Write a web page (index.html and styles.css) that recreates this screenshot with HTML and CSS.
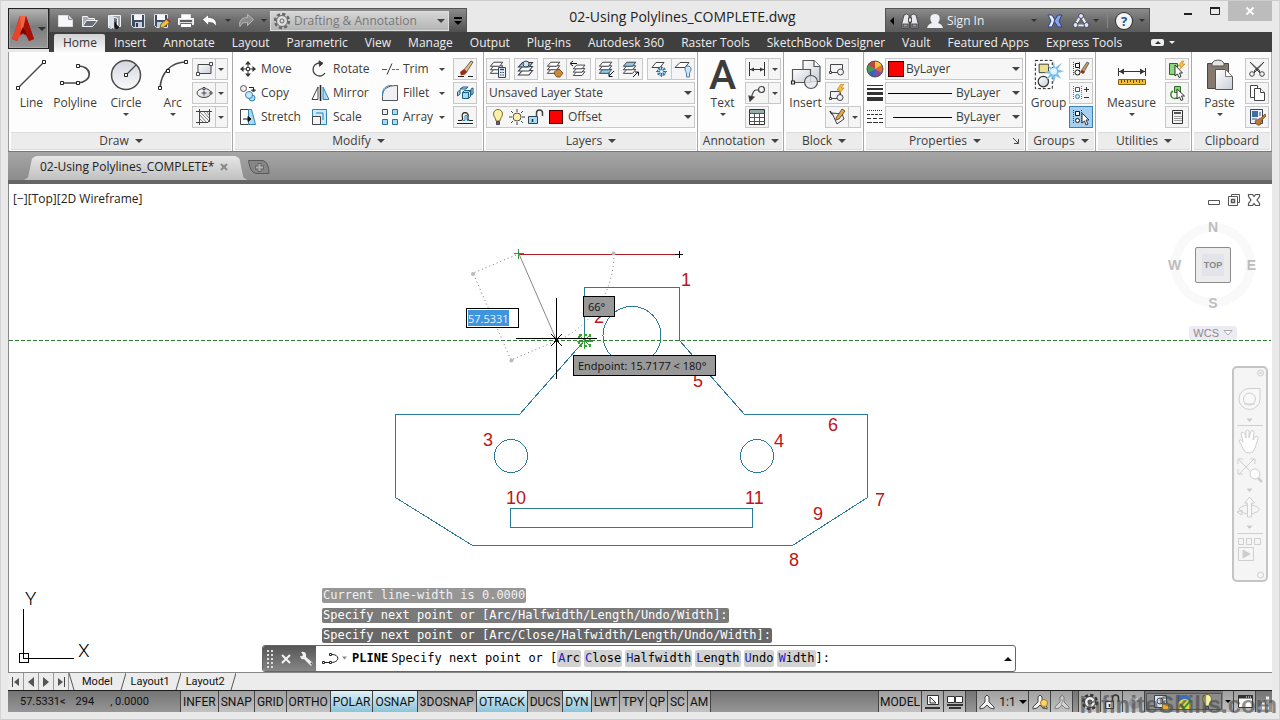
FILE: index.html
```html
<!DOCTYPE html>
<html lang="en">
<head>
<meta charset="utf-8">
<title>02-Using Polylines_COMPLETE.dwg</title>
<link rel="stylesheet" href="styles.css">
</head>
<body>
<svg class="defs" aria-hidden="true">
  <defs>
    <linearGradient id="steel" x1="0" y1="0" x2="1" y2="1"><stop offset="0" stop-color="#fff"/><stop offset="1" stop-color="#c9ced8"/></linearGradient>
    <linearGradient id="steelV" x1="0" y1="0" x2="0" y2="1"><stop offset="0" stop-color="#d2d6de"/><stop offset="1" stop-color="#fafafa"/></linearGradient>
    <symbol id="stack" viewBox="0 0 18 18">
      <g stroke="#3c3c44" stroke-width="1.1">
        <path d="M5.500 10.500h10l-3.500 4.500H1.500z" class="lay-c"/>
        <path d="M5.500 6.500h10l-3.500 4.500H1.500z" class="lay-b"/>
        <path d="M5.500 2.500h10l-3.500 4.500H1.500z" class="lay-a"/>
      </g>
    </symbol>
    <symbol id="scale" viewBox="0 0 18 18">
      <path d="M9 2L7 4v5L2 14v2l4-1 3-3 3 3 4 1v-2l-5-5V4z" fill="#f4f4f4" stroke="#444" stroke-width="1"/>
    </symbol>
  </defs>
</svg>

<header class="top">
  <button class="app" aria-label="Application menu">
    <svg width="24" height="27" viewBox="0 0 24 27"><path d="M9 1h6l8 23-5 2-2-5-4-2-4 2-2 5-5-2z" fill="#c5190c"/><path d="M9 1L1 24l5 2 6-12z" fill="#e8432b"/><path d="M9 1h6l-2 12-3 1z" fill="#f06548"/><path d="M15 1l8 23-5 2-6-12z" fill="#a80f06"/><path d="M9 19l3-7 4 8-4-2z" fill="#6d0703"/></svg>
    <i class="caret dark wide"></i>
  </button>
  <div class="titlebar">
    <div class="qat">
      <button class="ic" aria-label="New"><svg width="18" height="18" viewBox="0 0 18 18"><path d="M1.500 3.500h10l4 4v7h-14z" fill="#f8f8fa" stroke="#ddd"/><path d="M11.500 3.500v4h4" fill="#c6cad4" stroke="#8a8e98"/></svg></button>
      <button class="ic" aria-label="Open"><svg width="18" height="18" viewBox="0 0 18 18"><path d="M1.500 14.500V4.500h5l1 2h6v2" fill="#a8adb8" stroke="#f4f4f4"/><path d="M1.500 14.500l4-6h11l-5 6z" fill="#676c78" stroke="#f4f4f4"/></svg></button>
      <button class="ic" aria-label="Open from cloud"><svg width="18" height="18" viewBox="0 0 18 18"><path d="M3.500 15.500v-12h12v11h-3v-8l-6-2v12z" fill="#9aa6b4" stroke="#f4f4f4"/><path d="M4 3l5 2v12l-5-3z" fill="#d9e2ea"/><path d="M10 10v5h3M11 13l3 2-3 2z" stroke="#111" fill="#111"/></svg></button>
      <button class="ic" aria-label="Save"><svg width="18" height="18" viewBox="0 0 18 18"><path d="M2.500 2.500h13v13h-11l-2-2z" fill="#3f4a66" stroke="#dfe3ea"/><path d="M5 3h8v5H5z" fill="#f6f6f8"/><path d="M6 10h7v5H6z" fill="#c6ccd8"/><path d="M7 11h2v4H7z" fill="#333b52"/></svg></button>
      <button class="ic" aria-label="Save as"><svg width="18" height="18" viewBox="0 0 18 18"><path d="M1.500 2.500h13v13h-11l-2-2z" fill="#3f4a66" stroke="#dfe3ea"/><path d="M4 3h8v5H4z" fill="#f6f6f8"/><path d="M4 10h7v5H4z" fill="#c6ccd8"/><path d="M7 16l1-4 6-5 3 3-6 5z" fill="#f2c23a" stroke="#664"/><path d="M14 7l3 3" stroke="#b33" stroke-width="2"/></svg></button>
      <button class="ic" aria-label="Print"><svg width="18" height="18" viewBox="0 0 18 18"><path d="M4.500 7V2.500h9V7" fill="#fff" stroke="#ddd"/><path d="M1.500 6.500h15v6h-15z" fill="#dfe1e6" stroke="#f8f8f8"/><path d="M3 9h12" stroke="#333" stroke-width="1.500"/><path d="M3.500 11.500h11v4h-11z" fill="#fff" stroke="#666"/></svg></button>
      <button class="ic" aria-label="Undo"><svg width="18" height="18" viewBox="0 0 18 18"><path d="M1.500 7.500l6-5v3c6 0 9 4 7.500 9-2-4-4-4-7.500-4v3z" fill="#fff" stroke="#444" stroke-width=".6"/></svg></button>
      <button class="ic mini" aria-label="Undo list"><i class="caret dark"></i></button>
      <button class="ic" aria-label="Redo"><svg width="18" height="18" viewBox="0 0 18 18"><path d="M16.500 7.500l-6-5v3c-6 0-9 4-7.500 9 2-4 4-4 7.500-4v3z" fill="#8c8c8c" stroke="#c0c0c0" stroke-width=".9"/></svg></button>
      <button class="ic mini" aria-label="Redo list"><i class="caret dark"></i></button>
      <label class="workspace">
        <svg width="18" height="18" viewBox="0 0 18 18" fill="none" stroke="#666"><circle cx="9" cy="9" r="7" stroke-width="2.400" stroke-dasharray="3.200 2.300"/><circle cx="9" cy="9" r="5.500" fill="#ddd"/><circle cx="9" cy="9" r="2"/></svg>
        <select aria-label="Workspace"><option>Drafting &amp; Annotation</option></select><i class="caret wide"></i>
      </label>
      <button class="qatmore" aria-label="Customize toolbar"><b></b><i class="caret black wide"></i></button>
    </div>
    <h1>02-Using Polylines_COMPLETE.dwg</h1>
    <div class="info">
      <i class="caret-left"></i>
      <button class="ic" aria-label="Search"><svg width="18" height="18" viewBox="0 0 18 18" fill="#e8e8ec" stroke="#333" stroke-width=".8"><path d="M3 3q3-2 5 0v13H1v-5zM10 3q3-2 5 0l2 8v5h-7z"/><path d="M7.500 6h3v4h-3z"/><path d="M2 12h5v3H2zM11 12h5v3h-5z" fill="#999"/></svg></button>
      <button class="signin"><svg width="18" height="18" viewBox="0 0 18 18"><path d="M1 16q1-4 5-5c-3-4-2-9 3-9s6 5 3 9q4 1 5 5z" fill="#eef0f4"/></svg>Sign In</button>
      <i class="caret dark push"></i>
      <button class="ic" aria-label="Exchange"><svg width="18" height="18" viewBox="0 0 18 18"><path d="M2 3h4l3 5-3 7H2l3-6z" fill="#e4eaff" stroke="#27408a"/><path d="M16 3h-4L8 9l4 6h4l-3-6z" fill="#8ba4e8" stroke="#27408a"/></svg></button>
      <button class="ic" aria-label="Autodesk 360"><svg width="18" height="18" viewBox="0 0 18 18" fill="none"><path d="M9 4L3.500 13h11z" stroke="#f0f2f8" stroke-width="2.500"/><path d="M9 6.500L5.500 12h7z" stroke="#556" /><circle cx="9" cy="4" r="2.500" fill="#dfe4f2" stroke="#446"/><circle cx="3.500" cy="13" r="2.500" fill="#dfe4f2" stroke="#446"/><circle cx="14.500" cy="13" r="2.500" fill="#dfe4f2" stroke="#446"/></svg></button>
      <i class="caret dark"></i><span class="vsep"></span>
      <button class="help" aria-label="Help">?</button>
      <i class="caret dark"></i>
    </div>
    <div class="winbtns">
      <button aria-label="Minimize"><svg width="12" height="12" viewBox="0 0 12 12"><path d="M2 9h8" stroke="#222" stroke-width="2"/></svg></button>
      <button aria-label="Maximize"><svg width="12" height="12" viewBox="0 0 12 12"><path d="M1.500 2.500h9v7h-9z" fill="none" stroke="#222"/><path d="M1 3h10" stroke="#222" stroke-width="2"/></svg></button>
      <button class="close" aria-label="Close"><svg width="10" height="10" viewBox="0 0 10 10"><path d="M1.500 1.500l7 7M8.500 1.500l-7 7" stroke="#fff" stroke-width="1.800"/></svg></button>
    </div>
  </div>
  <nav class="tabs">
    <button class="active">Home</button><button>Insert</button><button>Annotate</button><button>Layout</button><button>Parametric</button><button>View</button><button>Manage</button><button>Output</button><button>Plug-ins</button><button>Autodesk 360</button><button>Raster Tools</button><button>SketchBook Designer</button><button>Vault</button><button>Featured Apps</button><button>Express Tools</button>
    <button class="collapse" aria-label="Minimize ribbon"><span></span><i class="caret light"></i></button>
  </nav>
</header>

<main>
<section class="ribbon">
  <div class="panel">
    <div class="body draw">
      <button class="big"><svg width="32" height="32" viewBox="0 0 32 32" fill="#fff" stroke="#4a4a4a"><path d="M3 29L29 3" stroke-width="1.500"/><path d="M1.500 27.500h3v3h-3zM27.500 1.500h3v3h-3z" stroke="#222"/></svg>Line</button>
      <button class="big"><svg width="32" height="32" viewBox="0 0 32 32" fill="none" stroke="#4a4a4a"><path d="M3 24h16c15-1 15-17 0-17" stroke-width="1.700"/><path d="M1.500 22.500h3v3h-3zM17.500 22.500h3v3h-3zM17.500 5.500h3v3h-3z" fill="#fff" stroke="#222"/></svg>Polyline</button>
      <button class="big"><svg width="32" height="32" viewBox="0 0 32 32" fill="none" stroke="#4a4a4a"><circle cx="16" cy="16" r="14.500" fill="url(#steelV)" stroke-width="1.500"/><path d="M16 16L26 6" stroke-width="1.300"/><path d="M14.500 14.500h3v3h-3z" fill="#fff" stroke="#222"/></svg>Circle<i class="caret"></i></button>
      <button class="big"><svg width="32" height="32" viewBox="0 0 32 32" fill="none" stroke="#4a4a4a"><path d="M3 29C4 13 15 3 29 3" stroke-width="1.700"/><path d="M1.500 27.500h3v3h-3zM9.500 10.500h3v3h-3zM27.500 1.500h3v3h-3z" fill="#fff" stroke="#222"/></svg>Arc<i class="caret"></i></button>
      <div class="stackcol">
        <div class="split"><button aria-label="Rectangle"><svg width="18" height="18" viewBox="0 0 18 18" fill="none" stroke="#444"><path d="M3 4.500h13v9H3z" fill="url(#steel)"/><path d="M1.500 12.500h3v3h-3zM14.500 2.500h3v3h-3z" fill="#fff"/></svg></button><button aria-label="Rectangle list"><i class="caret"></i></button></div>
        <div class="split"><button aria-label="Ellipse"><svg width="18" height="18" viewBox="0 0 18 18" fill="none" stroke="#444"><ellipse cx="9" cy="9" rx="7" ry="4.500" fill="url(#steel)"/><path d="M9 6.500v5M6.500 9h5"/><path d="M8 3.500h2v2H8zM15 8h2v2h-2z" fill="#fff"/></svg></button><button aria-label="Ellipse list"><i class="caret"></i></button></div>
        <div class="split"><button aria-label="Hatch"><svg width="18" height="18" viewBox="0 0 18 18" fill="none" stroke="#444"><path d="M4.500 1v16M14.500 1v13M1 3.500h16M1 14.500h12l2-3"/><path d="M5 7l6 7M5 11l3 3M5 4l9 9M9 4l5 6M12 4l2 3" stroke="#777" stroke-width=".9"/></svg></button><button aria-label="Hatch list"><i class="caret"></i></button></div>
      </div>
    </div>
    <footer><button>Draw<i class="caret wide"></i></button></footer>
  </div>

  <div class="panel">
    <div class="body modify">
      <button class="cmd"><svg width="18" height="18" viewBox="0 0 18 18"><path d="M9 1l3 3.500H6zM9 17l3-3.500H6zM1 9l3.500-3v6zM17 9l-3.500-3v6z" fill="#333"/><path d="M9 4v3M9 11v3M4 9h3M11 9h3" stroke="#333"/><path d="M7.500 7.500h3v3h-3z" fill="#fff" stroke="#333"/></svg>Move</button>
      <button class="cmd"><svg width="18" height="18" viewBox="0 0 18 18" fill="none" stroke="#444"><path d="M14 13A6.500 6.500 0 1 1 10.500 3.300" stroke-width="1.300"/><path d="M8 .8l4 2.500-3.500 3z" fill="#333"/></svg>Rotate</button>
      <button class="cmd"><svg width="18" height="18" viewBox="0 0 18 18"><path d="M1 9.500h5" stroke="#555"/><path d="M6 14.500l5-11" stroke="#333"/><path d="M11 9.500h7" stroke="#2a76a8" stroke-dasharray="3 1"/></svg>Trim<i class="caret"></i></button>
      <button class="sq" aria-label="Erase"><svg width="18" height="18" viewBox="0 0 18 18"><path d="M2 16.500h6M12 16.500h5" stroke="#222"/><path d="M7 11l8-10 2 1-7 11z" fill="#e8c07a" stroke="#444" stroke-width=".8"/><path d="M4 12l4-3 3 2.500-2 3-4 1z" fill="#9c2c1c"/></svg></button>
      <button class="cmd"><svg width="18" height="18" viewBox="0 0 18 18"><circle cx="4.500" cy="4.500" r="3" fill="#eee" stroke="#555"/><circle cx="13" cy="14" r="3" fill="#a9dcf4" stroke="#2d83b4"/><circle cx="10" cy="11" r="3.500" fill="#cbeafa" stroke="#2d83b4"/><path d="M10 3.500h4.500V7M12.500 6h4l-2 2z" stroke="#222" fill="none"/></svg>Copy</button>
      <button class="cmd"><svg width="18" height="18" viewBox="0 0 18 18"><path d="M7 3v12.500H1z" fill="#fff" stroke="#444"/><path d="M9.500 1v16" stroke="#222" stroke-width="1.600"/><path d="M12 3v12.500h6z" fill="#a9dcf4" stroke="#2d83b4"/></svg>Mirror</button>
      <button class="cmd"><svg width="18" height="18" viewBox="0 0 18 18"><path d="M1.500 16.500v-4C1.500 5 6 1.500 16.500 1.500v15h-15" fill="#f0f1f5" stroke="#555"/><path d="M1.500 12V9C2 4 5 1.500 11 1.500" fill="none" stroke="#3a86b8"/></svg>Fillet<i class="caret"></i></button>
      <button class="sq" aria-label="Explode"><svg width="18" height="18" viewBox="0 0 18 18" fill="#a9dcf4" stroke="#1c5c80"><path d="M4 5l3-2h5l-2 2z"/><path d="M6.500 8.500h6v6h-6zM6.500 8.500l2-2h6l-2 2M12.500 14.500l2-2v-6" /><path d="M1.500 12V8L4 6v4zM15 5l2-1v6l-2 1z"/></svg></button>
      <button class="cmd"><svg width="18" height="18" viewBox="0 0 18 18"><path d="M1.500 1.500h8v15h-8z" fill="#fff" stroke="#444"/><path d="M9.500 1.500h3l4 15h-7z" fill="#a9dcf4" stroke="#2d83b4"/><path d="M4 11h7M9 8.500l3 2.500-3 2.500z" stroke="#111" fill="#111"/></svg>Stretch</button>
      <button class="cmd"><svg width="18" height="18" viewBox="0 0 18 18"><path d="M1.500 1.500h14v15h-14z" fill="#cbeafa" stroke="#2d83b4"/><path d="M1.500 8.500h8v8h-8z" fill="#f4f4f4" stroke="#444"/><path d="M5 5h7v7" fill="none" stroke="#2d83b4"/></svg>Scale</button>
      <button class="cmd"><svg width="18" height="18" viewBox="0 0 18 18"><path d="M1.500 1.500h5v5h-5z" fill="#eee" stroke="#444"/><path d="M11.500 1.500h5v5h-5zM1.500 11.500h5v5h-5zM11.500 11.500h5v5h-5z" fill="#a9dcf4" stroke="#2d7099"/></svg>Array<i class="caret"></i></button>
      <button class="sq" aria-label="Offset"><svg width="18" height="18" viewBox="0 0 18 18" fill="none"><path d="M1 15.500h16M2 12.500h3q2 0 1.500-3C4 3 14 3 12 9.500q-.5 3 2 3h3" stroke="#222" stroke-width="1.200"/><path d="M7 12.500h2V7.500h2v5h2" stroke="#2d83b4"/></svg></button>
    </div>
    <footer><button>Modify<i class="caret wide"></i></button></footer>
  </div>

  <div class="panel">
    <div class="body layers">
      <div class="toolrow">
        <button class="sq" aria-label="Layer properties"><svg width="18" height="18" viewBox="0 0 18 18"><use href="#stack" width="16" height="16"/><path d="M9.500 7.500h7v10h-7z" fill="#e8f0f8" stroke="#345"/><path d="M11 9.500h4" stroke="#346" stroke-width="1.500"/><path d="M11 12.500h4M11 15h4" stroke="#346" stroke-dasharray="1 .5"/></svg></button>
        <button class="sq" aria-label="Make current"><svg width="18" height="18" viewBox="0 0 18 18"><use href="#stack" class="top-blue"/><circle cx="9" cy="4" r="3" fill="#cfe4ee" stroke="#345"/></svg></button>
        <div class="pair"><button aria-label="Match layer"><svg width="18" height="18" viewBox="0 0 18 18"><use href="#stack" width="16" height="16"/><path d="M8 12l5-3 4 4-3 4q-4 1-5-2z" fill="#c98a3c" stroke="#7a4a12" stroke-width=".8"/></svg></button><button aria-label="Previous layer"><svg width="18" height="18" viewBox="0 0 18 18"><use href="#stack" x="3" y="3" width="15" height="15"/><path d="M2 3.500h6M4 1L1 3.500 4 6" stroke="#111" fill="none"/></svg></button></div>
        <div class="pair"><button aria-label="Isolate"><svg width="18" height="18" viewBox="0 0 18 18"><use href="#stack" class="low-blue" width="16" height="16"/><path d="M16 11l-5 5M11 13v3.500h3.500" stroke="#111" fill="none"/></svg></button><button aria-label="Unisolate"><svg width="18" height="18" viewBox="0 0 18 18"><use href="#stack" class="top-blue" width="16" height="16"/><path d="M11 17l5-5M13 12h3.500v3.500" stroke="#111" fill="none"/></svg></button></div>
        <div class="pair"><button aria-label="Freeze"><svg width="18" height="18" viewBox="0 0 18 18"><path d="M6 2.500h8l-4 5H2z" fill="#fff" stroke="#444"/><g stroke="#2878ae" stroke-width="1.200"><path d="M11.500 6v11M6 11.500h11M8 8l7 7M15 8l-7 7"/><circle cx="11.500" cy="11.500" r="4" fill="none" stroke-dasharray="2 1"/></g><circle cx="11.500" cy="11.500" r="1.500" fill="#fff"/></svg></button><button aria-label="Layer off"><svg width="18" height="18" viewBox="0 0 18 18"><path d="M6 2.500h9l-4 5H1z" fill="#fff" stroke="#444"/><path d="M11 9c0-4 6-4 6 0 0 2-1.500 3-1.500 5v3h-3v-3c0-2-1.500-3-1.500-5z" fill="#cfe4f6" stroke="#4a80aa"/></svg></button></div>
      </div>
      <label class="combo"><select aria-label="Layer state"><option>Unsaved Layer State</option></select><i class="caret wide"></i></label>
      <label class="combo lay">
        <svg width="18" height="18" viewBox="0 0 18 18"><path d="M4.500 6c0-6 9-6 9 0 0 3-2.500 4-2.500 7H7c0-3-2.500-4-2.500-7z" fill="#fdf0a6" stroke="#776a30"/><path d="M7.500 13.500h3v3h-3z" fill="#667" stroke="#445"/></svg>
        <svg width="18" height="18" viewBox="0 0 18 18"><path d="M9 1v3M9 14v3M1 9h3M14 9h3M3 3l2 2M13 13l2 2M15 3l-2 2M5 13l-2 2" stroke="#444"/><circle cx="9" cy="9" r="4" fill="#fdf0a6" stroke="#555"/></svg>
        <svg width="18" height="18" viewBox="0 0 18 18"><path d="M1.500 8.500h9v7h-9z" fill="#a9dcf4" stroke="#345"/><path d="M9.500 8V5c0-4 6-4 6 0v3" fill="none" stroke="#444" stroke-width="1.500"/><path d="M5.500 11v3" stroke="#234" stroke-width="1.500"/></svg>
        <span class="swatch"></span>
        <select aria-label="Layer"><option>Offset</option></select><i class="caret wide"></i>
      </label>
    </div>
    <footer><button>Layers<i class="caret wide"></i></button></footer>
  </div>

  <div class="panel">
    <div class="body two">
      <button class="big"><span class="bigA" aria-hidden="true">A</span>Text<i class="caret"></i></button>
      <div class="stackcol">
        <div class="split"><button aria-label="Dimension"><svg width="18" height="18" viewBox="0 0 18 18"><path d="M1.500 2v14M16.500 2v14M2 9.500h14" stroke="#333"/><path d="M2 9.500l4-2v4zM16 9.500l-4-2v4z" fill="#333"/></svg></button><button aria-label="Dimension list"><i class="caret"></i></button></div>
        <div class="split"><button aria-label="Leader"><svg width="18" height="18" viewBox="0 0 18 18" fill="none" stroke="#444" stroke-width="1.200"><circle cx="13.500" cy="5.500" r="3"/><path d="M10.500 6H8q-3 0-5 9"/><path d="M1 12l5 1-4 4z" fill="#333"/></svg></button><button aria-label="Leader list"><i class="caret"></i></button></div>
        <button class="sq" aria-label="Table"><svg width="18" height="18" viewBox="0 0 18 18"><path d="M1.500 1.500h15v15h-15z" fill="#fff" stroke="#333"/><path d="M2 2h14v3H2z" fill="#9aa"/><path d="M1.500 5.500h15M1.500 9.500h15M1.500 13.500h15M6.500 5v11M11.500 5v11" stroke="#555"/></svg></button>
      </div>
    </div>
    <footer><button>Annotation<i class="caret wide"></i></button></footer>
  </div>

  <div class="panel">
    <div class="body two">
      <button class="big"><svg width="32" height="32" viewBox="0 0 32 32" stroke="#555" stroke-width="1.200"><path d="M13 1.500h11l6 6v15H13z" fill="url(#steel)"/><path d="M24 1.500v6h6" fill="#fff"/><path d="M2.500 10.500h18v13h-18z" fill="url(#steel)"/><circle cx="21" cy="23" r="6.500" fill="#e3e6ec" fill-opacity=".8"/><path d="M1.500 22h3v3h-3z" fill="#fff" stroke="#222"/></svg>Insert</button>
      <div class="stackcol">
        <button class="sq" aria-label="Create block"><svg width="18" height="18" viewBox="0 0 18 18" fill="#f2f3f6" stroke="#444"><path d="M2.500 4.500h12v8h-12z"/><circle cx="12.500" cy="12" r="3"/><path d="M1.500 11.500h2v2h-2z" fill="#fff"/></svg></button>
        <button class="sq" aria-label="Edit block"><svg width="18" height="18" viewBox="0 0 18 18" fill="#f2f3f6" stroke="#444"><path d="M2.500 7.500h10v7h-10z"/><circle cx="12" cy="13.500" r="3"/><path d="M1.500 13.500h2v2h-2z" fill="#fff"/><path d="M13 0l-4 6h3l-1 4 5-6h-3l3-4z" fill="#f8c440" stroke="#c07a10" stroke-width=".7"/></svg></button>
        <div class="split"><button aria-label="Edit attributes"><svg width="18" height="18" viewBox="0 0 18 18"><path d="M2 3q1 3 4 4" fill="none" stroke="#333" stroke-width="1.500"/><path d="M4 5l10 1 2 5-7 5z" fill="#f4f4f4" stroke="#444"/><path d="M8 10l6-9 3 2-6 8-3 1z" fill="#e6a650" stroke="#54401e" stroke-width=".8"/></svg></button><button aria-label="Attribute list"><i class="caret"></i></button></div>
      </div>
    </div>
    <footer><button>Block<i class="caret wide"></i></button></footer>
  </div>

  <div class="panel">
    <div class="body props">
      <svg width="18" height="18" viewBox="0 0 18 18"><circle cx="9" cy="9" r="8" fill="#888"/><path d="M9 9V1a8 8 0 0 1 7 4z" fill="#f0c63c"/><path d="M9 9l7-4a8 8 0 0 1 0 8z" fill="#e46a30"/><path d="M9 9l7 4a8 8 0 0 1-7 4z" fill="#8a4a9c"/><path d="M9 9v8a8 8 0 0 1-7-4z" fill="#3a62b8"/><path d="M9 9l-7 4a8 8 0 0 1 0-8z" fill="#3aa050"/><path d="M9 9L2 5a8 8 0 0 1 7-4z" fill="#c84040"/><circle cx="9" cy="9" r="8" fill="none" stroke="#555"/></svg>
      <label class="combo"><span class="swatch"></span><select aria-label="Object color"><option>ByLayer</option></select><i class="caret wide"></i></label>
      <svg width="18" height="18" viewBox="0 0 18 18" stroke="#333"><path d="M1 1.500h16"/><path d="M1 5h16" stroke-width="2"/><path d="M1 9.500h16" stroke-width="3"/><path d="M1 15h16" stroke-width="4"/></svg>
      <label class="combo"><span class="line"></span><select aria-label="Lineweight"><option>ByLayer</option></select><i class="caret wide"></i></label>
      <svg width="18" height="18" viewBox="0 0 18 18" stroke="#333"><path d="M1 2.500h16" stroke-dasharray="1 1"/><path d="M1 6.500h16" stroke-dasharray="3 1"/><path d="M1 10.500h16" stroke-dasharray="4 2"/><path d="M1 14.500h16" stroke-dasharray="5 1"/></svg>
      <label class="combo"><span class="line short"></span><select aria-label="Linetype"><option>ByLayer</option></select><i class="caret wide"></i></label>
    </div>
    <footer><button>Properties<i class="caret wide"></i></button><svg class="launcher" width="8" height="8" viewBox="0 0 8 8"><path d="M1 1l5 5M6.500 2v4.500H2" stroke="#444" fill="none"/></svg></footer>
  </div>

  <div class="panel">
    <div class="body two">
      <button class="big"><svg width="32" height="34" viewBox="0 0 32 34"><path d="M1.500 1.500h18v30h-18z" fill="none" stroke="#111" stroke-dasharray="3 2"/><path d="M5.500 5.500h10v9h-10z" fill="#ece28c" stroke="#333"/><circle cx="10" cy="24" r="5.500" fill="url(#steel)" stroke="#333" stroke-width="1.300"/><path d="M21 1l1.500 8L30 4l-5 7 7 2-7 2 4 6-6-3-2 8-2-8-6 4 4-6-6-2 7-2-4-6 6 4z" fill="#7dbfe6"/><circle cx="21" cy="13" r="3.500" fill="#e2f4ff"/></svg>Group</button>
      <div class="stackcol">
        <button class="sq" aria-label="Ungroup"><svg width="18" height="18" viewBox="0 0 18 18"><path d="M1.500 2v14M7.500 2v14" stroke="#444" stroke-dasharray="1 1"/><path d="M3.500 3.500h4v4h-4z" fill="#fff" stroke="#111"/><circle cx="5.500" cy="12.500" r="2.500" fill="#fff" stroke="#111"/><path d="M9 11l6-9 2 1-5 9z" fill="#c79b58" stroke="#555" stroke-width=".8"/><path d="M8 12l2-2 3 2-2 2z" fill="#9c2c1c"/></svg></button>
        <button class="sq" aria-label="Group edit"><svg width="18" height="18" viewBox="0 0 18 18"><path d="M1.500 2v14M9.500 2v14" stroke="#2d83b4" stroke-dasharray="1 1"/><path d="M3.500 3.500h4v4h-4z" fill="#fff" stroke="#456"/><circle cx="5.500" cy="12.500" r="2" fill="#cbeafa" stroke="#2d83b4"/><path d="M12 5.500h5M14.500 3v5M12 13.500h5" stroke="#333"/></svg></button>
        <button class="sq on" aria-label="Group selection"><svg width="18" height="18" viewBox="0 0 18 18"><path d="M1.500 2v14M9.500 2v14" stroke="#345" stroke-dasharray="1 1"/><path d="M3.500 3.500h4v4h-4z" fill="#fff" stroke="#111"/><circle cx="5.500" cy="12.500" r="2" fill="#fff" stroke="#111"/><path d="M10 5v10l2.500-2 1.500 4 2-1-2-4h3z" fill="#fff" stroke="#333"/></svg></button>
      </div>
    </div>
    <footer><button>Groups<i class="caret wide"></i></button></footer>
  </div>

  <div class="panel">
    <div class="body two">
      <button class="big"><svg width="32" height="32" viewBox="0 0 32 32"><path d="M2.500 9v8M29.500 9v8M3 12.500h26" stroke="#333"/><path d="M3 12.500l5-3v6zM29 12.500l-5-3v6z" fill="#333"/><path d="M2.500 20.500h27v5h-27z" fill="#f2bd3a" stroke="#8a6410"/><path d="M5.500 21v3M8.500 21v2M11.500 21v3M14.500 21v2M17.500 21v3M20.500 21v2M23.500 21v3M26.500 21v2" stroke="#6a4a08"/></svg>Measure<i class="caret"></i></button>
      <div class="stackcol">
        <button class="sq" aria-label="Quick select"><svg width="18" height="18" viewBox="0 0 18 18"><path d="M1.500 3.500h8v11h-8z" fill="#8fd47e" stroke="#2f6a24"/><path d="M14 1l-4 5h3l-1 3 5-5h-3l2-3z" fill="#f8c440" stroke="#c07a10" stroke-width=".6"/><path d="M7 5v11l2.500-2 1.500 3.500 2-1-1.500-3.500h3z" fill="#fff" stroke="#333"/></svg></button>
        <button class="sq" aria-label="Select all"><svg width="18" height="18" viewBox="0 0 18 18"><path d="M6.500 2.500h6v6h-6z" fill="#8fd47e" stroke="#2f6a24"/><path d="M5 7a4 4 0 1 0 5 6" fill="none" stroke="#3f8a34" stroke-width="1.500"/><path d="M9 5v10l2.500-2 1.500 3.500 2-1-1.500-3.500h3z" fill="#fff" stroke="#333"/></svg></button>
        <button class="sq" aria-label="Calculator"><svg width="18" height="18" viewBox="0 0 18 18"><path d="M4.500 2.500h10v13h-10z" fill="#f4f4f6" stroke="#333"/><path d="M6 5h7" stroke="#555" stroke-width="2"/><path d="M6.500 8.500h7M6.500 10.500h7M6.500 12.500h7" stroke="#444" stroke-dasharray="1 1"/></svg></button>
      </div>
    </div>
    <footer><button>Utilities<i class="caret wide"></i></button></footer>
  </div>

  <div class="panel">
    <div class="body two">
      <button class="big"><svg width="32" height="32" viewBox="0 0 32 32"><path d="M3.500 4.500h21v25h-21z" fill="#85786e" stroke="#4e4640"/><path d="M8 7V4q2-3 6-3t6 3v3z" fill="#e4e4e8" stroke="#555"/><path d="M11.500 10.500h10l7 7v13h-17z" fill="url(#steel)" stroke="#555"/><path d="M21.500 10.500v7h7z" fill="#fff" stroke="#777"/></svg>Paste<i class="caret"></i></button>
      <div class="stackcol">
        <button class="sq" aria-label="Cut"><svg width="18" height="18" viewBox="0 0 18 18" fill="#ddd" stroke="#444"><path d="M2 2l9 10 1-1zM16 2L7 12l-1-1z"/><circle cx="4" cy="14" r="2.300" fill="none"/><circle cx="14" cy="14" r="2.300" fill="none"/><path d="M8 9l4 4M10 9l-4 4"/></svg></button>
        <button class="sq" aria-label="Copy clip"><svg width="18" height="18" viewBox="0 0 18 18" fill="#fff" stroke="#444"><path d="M2.500 1.500h7v12h-7z"/><path d="M6.500 4.500h6l4 4v8h-10z"/><path d="M12.500 4.500v4h4"/></svg></button>
        <button class="sq" aria-label="Match properties"><svg width="18" height="18" viewBox="0 0 18 18"><path d="M2.500 1.500h12v14h-12z" fill="#eef" stroke="#345"/><path d="M4 3h6v6H4z" fill="#3f6f9c"/><path d="M12 4v4M4 11h5" stroke="#456"/><path d="M7 13l6-3 4-4 1 2-4 4-2 5q-4 1-5-4z" fill="#c07830" stroke="#703c10" stroke-width=".7"/></svg></button>
      </div>
    </div>
    <footer><button>Clipboard</button></footer>
  </div>
</section>

<div class="filetabs">
  <div class="filetab"><span>02-Using Polylines_COMPLETE*</span><button aria-label="Close drawing"><svg width="8" height="8" viewBox="0 0 8 8"><path d="M1 1l6 6M7 1L1 7" stroke="#888" stroke-width="2"/></svg></button></div>
  <button class="newtab" aria-label="New drawing"><svg width="24" height="16" viewBox="0 0 24 16"><path d="M1.500 1.500H16q6 2 6 13H9q-6-1-7.500-13z" fill="#868686" stroke="#585858"/><path d="M8 8.500h9M12.500 4v9" stroke="#666" stroke-width="4"/><path d="M9 8.500h7M12.500 5v7" stroke="#b0b0b0" stroke-width="2"/></svg></button>
</div>

<section class="canvas">
  <svg class="drawing" width="100%" height="100%">
    <g transform="translate(-8 -184)">
      <g fill="none" stroke="#2a7a9c" shape-rendering="crispEdges">
        <path d="M584.500 340.500V287.500H679.500V340.500L744.500 414.500H867.500V497.500L792.500 545.500H472.500L395.500 497.500V414.500H519.500Z"/>
        <circle cx="632" cy="335.500" r="29"/><circle cx="511" cy="456" r="16.500"/><circle cx="757" cy="456" r="16.500"/>
        <path d="M510.500 508.500h242v19h-242z"/>
      </g>
      <g class="marks">
        <text x="681" y="286">1</text><text x="594" y="323">2</text><text x="483" y="446">3</text><text x="774" y="447">4</text><text x="693" y="387">5</text><text x="828" y="431">6</text><text x="875" y="506">7</text><text x="789" y="566">8</text><text x="813" y="520">9</text><text x="506" y="504">10</text><text x="745" y="504">11</text>
      </g>
      <g fill="none" shape-rendering="crispEdges">
        <path d="M9 340.500H4000" stroke="#2f7d32" stroke-dasharray="4 2"/>
        <path d="M519 254.500H679" stroke="#b01c24"/>
        <path d="M519 254.500H614" stroke="#5c4048" stroke-dasharray="1 3"/>
        <path d="M675 254.500h8M679.500 251v7" stroke="#000"/>
        <path d="M514 253.500h10M518.500 249v10" stroke="#2d9a35"/>
      </g>
      <path d="M519 254L556 339" stroke="#888" fill="none"/>
      <path d="M516 255L473 273 511 360 556 341M614 254A95 95 0 0 1 557 341" stroke="#777" stroke-dasharray="1 3" fill="none"/>
      <g fill="#bbb"><circle cx="473" cy="274" r="2"/><circle cx="511.500" cy="360.500" r="2"/><circle cx="613.500" cy="253.500" r="2"/></g>
      <g fill="none" stroke="#35a035" stroke-width="2" shape-rendering="crispEdges"><path d="M579 335h11v11h-11z" stroke-dasharray="3 2"/><path d="M580 336l9 9M589 336l-9 9M584.500 333v16M577 341h16" stroke-width="1"/></g>
      <g fill="none" stroke="#000" shape-rendering="crispEdges"><path d="M516 338.500h81M556.500 298v81M551 334l11 12M562 334l-11 12"/></g>
      <g class="ucs" fill="none" stroke="#000" shape-rendering="crispEdges"><path d="M23.500 609v49H74M19.500 653.500h9v9h-9z"/></g>
      <text class="axis" x="25" y="605">Y</text><text class="axis" x="78" y="657">X</text>
    </g>
  </svg>
  <span class="viewlabel">[−][Top][2D Wireframe]</span>
  <input class="dyn" aria-label="Distance" value="57.5331">
  <span class="tip angle">66°</span>
  <span class="tip endpoint">Endpoint: 15.7177 &lt; 180°</span>

  <div class="mdi">
    <button aria-label="Minimize drawing"><svg width="14" height="14" viewBox="0 0 14 14"><path d="M1.500 7.500h11v4h-11z" fill="#fff" stroke="#555"/></svg></button>
    <button aria-label="Restore drawing"><svg width="14" height="14" viewBox="0 0 14 14" fill="#fff" stroke="#555"><path d="M4.500 1.500h8v8h-8z"/><path d="M1.500 3.500h9v9h-9z"/><path d="M4.500 6.500h3v3h-3z" stroke-width="1.500"/></svg></button>
    <button aria-label="Close drawing window"><svg width="14" height="14" viewBox="0 0 14 14"><path d="M1.500 1.500h4L7 3.500l1.500-2h4v2L10 7l2.500 3.500v2h-4L7 10.500l-1.500 2h-4v-2L4 7 1.500 3.500z" fill="#fff" stroke="#555" stroke-width="1.200"/></svg></button>
  </div>
  <div class="cube">
    <span class="n">N</span><span class="w">W</span><button>TOP</button><span class="e">E</span><span class="s">S</span>
  </div>
  <button class="wcs">WCS<svg width="10" height="8" viewBox="0 0 10 8"><path d="M1 1.500h8L5 6z" fill="#fff" stroke="#aaa"/></svg></button>
  <div class="navbar">
    <svg width="32" height="212" viewBox="0 0 32 212" fill="none" stroke="#cfcfcf">
      <circle cx="26.500" cy="5" r="3"/><path d="M25 3.500l3 3M28 3.500l-3 3"/>
      <path d="M16 20.500h10v10A10.500 10.500 0 1 1 16 20.500z" fill="#f8f8f8"/><circle cx="15.500" cy="31" r="6"/><path d="M10 36h11" />
      <path d="M13 51h5l-2.500 2.500z" fill="#ccc"/><path d="M3 57.500h26"/>
      <path d="M11 84L5 73q1-3 4 1l-2-9q3-2 4 1l1 4V63q2-2 3 0v7l2-7q3-1 3 1l-1 8 3-4q3 0 2 3l-3 9q-2 5-5 5z" fill="#fff"/>
      <path d="M5 92l14 14M20 91L5 106M4 96v-5h5M21 96v-5h-5M4 101v5h5"/><circle cx="21" cy="106" r="5" fill="#fff"/><path d="M24 110l4 4" stroke-width="2.500"/>
      <path d="M13 121h5l-2.500 2.500z" fill="#ccc"/>
      <path d="M13.500 149v-14h-3l5-6 5 6h-3v14z" fill="#f8f8f8"/><path d="M13 146q-16-5 0-9M18 137q15 4 0 9M3 144l5-2v5z"/>
      <path d="M13 158h5l-2.500 2.500z" fill="#ccc"/><path d="M3 165.500h26"/>
      <path d="M4.500 170.500h5v6h-5zM12.500 170.500h5v6h-5zM20.500 170.500h6v6h-6zM4.500 179.500h15v13h-15z"/><path d="M9 182v8l7-4z" fill="#ccc"/>
      <circle cx="26.500" cy="207" r="3"/>
    </svg>
  </div>

  <div class="command">
    <output class="h1">Current line-width is 0.0000</output>
    <output class="h2">Specify next point or [Arc/Halfwidth/Length/Undo/Width]:</output>
    <output class="h3">Specify next point or [Arc/Close/Halfwidth/Length/Undo/Width]:</output>
    <div class="cmdline">
      <div class="handle">
        <svg width="6" height="18" viewBox="0 0 6 18"><path d="M1 0v18M5 0v18" stroke="#ddd" stroke-width="2" stroke-dasharray="2 2"/></svg>
        <button aria-label="Close command line"><svg width="10" height="10" viewBox="0 0 10 10"><path d="M1 1l8 8M9 1L1 9" stroke="#f4f4f4" stroke-width="2"/></svg></button>
        <button aria-label="Customize"><svg width="16" height="16" viewBox="0 0 16 16"><path d="M1 5q2 1 3-1-1-2-2-3 4-1 5 2v3l7 6-2 3-7-7q-3 1-4-3z" fill="#f0f0f0"/><circle cx="12.500" cy="12.500" r="1" fill="#555"/></svg></button>
      </div>
      <div class="prompt">
        <svg width="26" height="14" viewBox="0 0 26 14" fill="#fff" stroke="#222"><path d="M3 10.500h7c9 0 9-8 1-8" fill="none"/><path d="M1.500 9.500h2v2h-2zM8.500 9.500h2v2h-2zM8.500 1.500h2v2h-2z"/><path d="M21 4.500h5l-2.500 3z" fill="#888" stroke="none"/></svg>
        <b>PLINE</b><span>Specify next point or [</span><button><em>A</em>rc</button><button><em>C</em>lose</button><button><em>H</em>alfwidth</button><button><em>L</em>ength</button><button><em>U</em>ndo</button><button><em>W</em>idth</button><span>]:</span>
        <i class="caret-up"></i>
      </div>
    </div>
  </div>
</section>

<nav class="layouts">
  <div class="step">
    <button aria-label="First"><svg width="10" height="10" viewBox="0 0 10 10"><path d="M1.500 0v10" stroke="#444"/><path d="M8 1v8L3 5z" fill="#555"/></svg></button><button aria-label="Previous"><svg width="10" height="10" viewBox="0 0 10 10"><path d="M8 0v10L2 5z" fill="#555"/></svg></button><button aria-label="Next"><svg width="10" height="10" viewBox="0 0 10 10"><path d="M2 0v10l6-5z" fill="#555"/></svg></button><button aria-label="Last"><svg width="10" height="10" viewBox="0 0 10 10"><path d="M8.500 0v10" stroke="#444"/><path d="M2 1v8l5-4z" fill="#555"/></svg></button>
  </div>
  <svg width="6" height="17" viewBox="0 0 6 17"><path d="M0 0l5 17" stroke="#555"/></svg>
  <button class="cur">Model</button><svg width="6" height="17" viewBox="0 0 6 17"><path d="M6 0L1 17" stroke="#555"/></svg>
  <button>Layout1</button><svg width="6" height="17" viewBox="0 0 6 17"><path d="M6 0L1 17" stroke="#555"/></svg>
  <button>Layout2</button><svg width="6" height="17" viewBox="0 0 6 17"><path d="M6 0L1 17" stroke="#555"/></svg>
</nav>
</main>

<footer class="status">
  <div class="coords"><span>57.5331&lt;</span><span>294</span><span>, 0.0000</span></div>
  <div class="modes"><button>INFER</button><button>SNAP</button><button>GRID</button><button>ORTHO</button><button class="on">POLAR</button><button class="on">OSNAP</button><button>3DOSNAP</button><button class="on">OTRACK</button><button>DUCS</button><button class="on">DYN</button><button>LWT</button><button>TPY</button><button>QP</button><button>SC</button><button>AM</button></div>
  <div class="tools">
    <button>MODEL</button>
    <button aria-label="Quick view layouts"><svg width="18" height="18" viewBox="0 0 18 18"><path d="M3.500 2.500h11v9h-11z" fill="#fff" stroke="#333"/><path d="M6 4v6h6z" fill="none" stroke="#333"/><path d="M1 15h15" stroke="#333" stroke-width="2"/></svg></button>
    <button aria-label="Quick view drawings"><svg width="18" height="18" viewBox="0 0 18 18"><path d="M1.500 3.500h7v6h-7zM9.500 3.500h7v6h-7z" fill="#fff" stroke="#333"/><path d="M1 12h16M3 15h12" stroke="#333" stroke-width="2"/></svg></button>
    <span class="gap"></span>
    <button class="scale"><svg width="18" height="18"><use href="#scale"/></svg>1:1<i class="caret black wide"></i></button>
    <button aria-label="Annotation visibility"><svg width="18" height="18"><use href="#scale"/><circle cx="13" cy="10" r="3.500" fill="#fbd76a" stroke="#a87818"/><path d="M11.500 14h3v2h-3z" fill="#666"/></svg></button>
    <button class="dim" aria-label="Auto scale"><svg width="18" height="18"><use href="#scale"/><path d="M10 1L6 7h4l-2 5" stroke="#888" fill="none"/></svg></button>
    <span class="gap small"></span>
    <button aria-label="Workspace switching"><svg width="18" height="18" viewBox="0 0 18 18" fill="none" stroke="#333"><circle cx="9" cy="9" r="7" stroke-width="2.400" stroke-dasharray="3.200 2.300"/><circle cx="9" cy="9" r="5.500" fill="#eee"/><circle cx="9" cy="9" r="2" fill="#999"/></svg></button>
    <button aria-label="Lock toolbars"><svg width="18" height="18" viewBox="0 0 18 18"><path d="M2.500 8.500h8v7h-8z" fill="#eee" stroke="#333"/><path d="M9.500 8V5c0-4 6-4 6 0v4" fill="none" stroke="#333" stroke-width="1.500"/><path d="M6.500 11v3" stroke="#222" stroke-width="1.500"/></svg></button>
    <button class="dim" aria-label="Performance"><svg width="18" height="18" viewBox="0 0 18 18"><circle cx="10" cy="10" r="6" fill="#6f7684"/><path d="M7 10l6-5" stroke="#eee" stroke-width="1.500"/></svg></button>
    <div class="tray">
      <svg width="18" height="18" viewBox="0 0 18 18"><path d="M2.500 2.500h12v12h-12z" fill="#dde2ea" stroke="#345"/><circle cx="8" cy="8" r="3" fill="none" stroke="#345"/><path d="M10.500 10.500h6v6h-6z" fill="#f0a830" stroke="#774"/><path d="M12 10V8h3v2" fill="none" stroke="#555"/></svg>
      <svg width="18" height="18" viewBox="0 0 18 18"><path d="M3 2h9l4 4v10H3z" fill="#3d6fb0"/><path d="M3 10q7-8 13 0v6H3z" fill="#e8d84a"/><path d="M5 11l4 4 7-8" stroke="#3a9a38" stroke-width="2" fill="none"/></svg>
      <svg width="18" height="18" viewBox="0 0 18 18"><path d="M4.500 6c0-6 9-6 9 0 0 3-2.500 4-2.500 7H7c0-3-2.500-4-2.500-7z" fill="#fdf0a6" stroke="#776a30"/><path d="M7.500 13.500h3v3h-3z" fill="#667" stroke="#445"/></svg>
    </div>
    <button class="tight" aria-label="Tray settings"><i class="caret black"></i></button>
    <button aria-label="Clean screen"><svg width="18" height="18" viewBox="0 0 18 18"><path d="M2.500 2.500h14v12h-14z" fill="#fff" stroke="#333"/><path d="M2 4h15" stroke="#333" stroke-width="3"/><path d="M10 4h5" stroke="#fff" stroke-dasharray="1 1"/></svg></button>
    <svg class="grip" width="16" height="18" viewBox="0 0 16 18"><path d="M10 5h3M6 10h7M2 15h11" stroke="#eee" stroke-width="3" stroke-dasharray="3 1"/></svg>
  </div>
  <span class="watermark">InfiniteSkills.com</span>
</footer>
</body>
</html>
```

FILE: styles.css
```css
* { box-sizing: border-box; }

body {
  margin: 0;
  height: 100vh;
  min-height: 600px;
  padding: 0 8px 8px;
  display: flex;
  flex-direction: column;
  overflow: hidden;
  background: #e9e9e9;
  border-top: 1px solid #ccc;
  box-shadow: inset 0 -1px #ccc, inset 1px 0 #d4d4d4, inset -1px 0 #d4d4d4;
  font: 12px/16px "Open Sans", "Noto Sans", sans-serif;
  color: #3c3c3c;
}

button, select, input { font: inherit; color: inherit; }

button {
  margin: 0;
  padding: 0;
  border: 0;
  background: none;
  display: flex;
  align-items: center;
  justify-content: center;
  white-space: nowrap;
}

svg { display: block; flex: none; }
.defs { position: absolute; width: 0; height: 0; }

select {
  appearance: none;
  border: 0;
  background: none;
  padding: 0;
  flex: 1;
  min-width: 0;
}

.lay-a { fill: var(--layer-top, #fff); }
.lay-b { fill: #fff; }
.lay-c { fill: var(--layer-low, #fff); }
.top-blue { --layer-top: #8ccbea; }
.low-blue { --layer-low: #8ccbea; }

.caret {
  flex: none;
  border: 3px solid transparent;
  border-top-color: #444;
  border-bottom: 0;
}
.caret.wide { border-width: 4px 4px 0; }
.caret.dark { border-top-color: #333; }
.caret.black { border-top-color: #000; }
.caret.light { border-top-color: #eee; }
.caret-left { border: 4px solid transparent; border-right-color: #000; border-left: 0; }
.caret-up { border: 4px solid transparent; border-bottom-color: #111; border-top: 0; }

/* Title bar and ribbon tabs */
.top {
  display: grid;
  grid-template: 31px 20px / 41px 1fr;
  flex: none;
}

.app {
  grid-row: 1 / 3;
  margin: 7px 0 3px;
  gap: 3px;
  border: 1px solid #222;
  background: linear-gradient(#b4b4b4, #7c7c7c 45%, #969696);
  box-shadow: inset 0 0 0 1px #aaa;
  position: relative;
  z-index: 1;
}

.titlebar { display: flex; align-items: flex-end; }

.qat, .info {
  height: 24px;
  display: flex;
  align-items: center;
  background: linear-gradient(#8c8c8c, #6c6c6c 50%, #5c5c5c);
  border: 1px solid #555;
  border-bottom: 0;
}
.qat { padding-left: 4px; }
.ic { width: 24px; height: 22px; }
.ic.mini { width: 12px; }

.workspace {
  display: flex;
  align-items: center;
  gap: 3px;
  width: 179px;
  height: 20px;
  padding: 0 3px 0 2px;
  background: linear-gradient(#d6d6d6, #b4b4b4);
  border: 1px solid #ddd;
  color: #777;
}

.qatmore {
  width: 17px;
  height: 23px;
  flex-direction: column;
  gap: 2px;
  background: linear-gradient(#8a8a8a, #505050);
}
.qatmore b { width: 8px; height: 2px; background: #000; }

h1 {
  flex: 1;
  margin: 0;
  padding: 0 0 5px 13px;
  font-size: 14px;
  line-height: 20px;
  font-weight: 400;
  text-align: center;
  white-space: nowrap;
  color: #222;
}

.info { width: 265px; padding: 0 4px; }
.info .ic { margin-left: 2px; }
.info .caret-left { margin-right: 2px; }
.signin { gap: 3px; color: #eee; margin-left: 4px; }
.push { margin-left: auto; margin-right: 4px; }
.vsep { width: 1px; height: 14px; margin: 0 8px; background: #888; }
.help {
  width: 16px;
  height: 16px;
  margin-right: 7px;
  border-radius: 8px;
  background: #f4f4f4;
  box-shadow: 0 0 0 1px #333;
  color: #1f4f9c;
  font: bold 13px/16px "Open Sans", sans-serif;
}

.winbtns { width: 122px; align-self: flex-start; display: flex; justify-content: flex-end; }
.winbtns button { width: 27px; height: 20px; }
.winbtns .close { width: 44px; background: #bcbcbc; }

.tabs {
  display: flex;
  align-items: flex-end;
  padding-left: 5px;
  background: #3f3f3f;
  color: #eee;
}
.tabs button { height: 18px; padding: 0 8px 1px 9px; }
.tabs .active {
  background: linear-gradient(#d2d2d2, #fafafa);
  color: #333;
  border-radius: 2px 2px 0 0;
}
.tabs .collapse { margin-left: 12px; gap: 5px; }
.collapse span { width: 13px; height: 7px; border-radius: 2px; background: #eee; display: grid; place-items: center; }
.collapse span::after { content: ""; border: 3px solid transparent; border-top: 0; border-bottom-color: #333; }

/* Ribbon */
main { flex: 1; min-height: 0; display: flex; flex-direction: column; }

.ribbon {
  display: grid;
  grid-template-columns: 224fr 251fr 214fr 86fr 80fr 162fr 70fr 96fr 80fr;
  background: #fdfdfd;
  border-left: 1px solid #999;
}

.panel {
  min-width: 0;
  display: flex;
  flex-direction: column;
  border-right: 1px solid #a8a8a8;
  padding-bottom: 1px;
}
.panel > .body { height: 80px; padding: 6px 2px 0; }
.panel > footer {
  height: 18px;
  margin: 0 1px 0 2px;
  display: flex;
  justify-content: center;
  align-items: center;
  background: #ececec;
  border: 1px solid #dcdcdc;
  border-width: 1px 0;
  position: relative;
}
.panel > footer button { gap: 6px; }
.launcher { position: absolute; right: 4px; bottom: 4px; }

.big {
  flex: 1;
  flex-direction: column;
  justify-content: flex-start;
  height: 70px;
}
.big > svg, .bigA { height: 32px; margin: 1px 0 4px; }
.big > .caret { margin-top: 2px; }
.bigA { font: 500 41px/32px Roboto, sans-serif; color: #3c3c3c; }

.stackcol { display: grid; grid-auto-rows: 22px; gap: 2px; justify-items: start; align-content: start; }

.sq, .split, .pair {
  height: 22px;
  border: 1px solid #c8c8c8;
  background: #f5f5f6;
}
.sq { width: 24px; }
.split, .pair { display: flex; }
.split { width: 36px; }
.split button { width: 22px; }
.split button + button { flex: 1; border-left: 1px solid #c8c8c8; }
.pair { width: 48px; }
.pair button { flex: 1; }
.pair button + button { border-left: 1px solid #c8c8c8; }
.sq.on { background: #a6d0f2; border-color: #3a80b8; }

.draw { display: grid; grid-template-columns: 40fr 46fr 54fr 38fr 36px; }
.draw .stackcol { margin-right: -2px; }
.panel > .draw { padding-right: 4px; }
.two { display: flex; }

.modify {
  display: grid;
  grid-template-columns: 72fr 70fr 72fr 24px;
  grid-auto-rows: 22px;
  gap: 2px 0;
  align-content: start;
}
.panel > .modify { padding: 6px 6px 0 6px; }
.cmd { justify-content: flex-start; gap: 4px; }
.cmd .caret { margin-left: auto; margin-right: 8px; }

.layers { display: grid; grid-auto-rows: 22px; gap: 2px; align-content: start; }
.toolrow { display: flex; justify-content: space-between; }
.combo {
  display: flex;
  align-items: center;
  gap: 4px;
  padding: 0 2px;
  height: 22px;
  min-width: 0;
  border: 1px solid #c8c8c8;
  background: #f6f6f7;
}
.lay { gap: 1px; }
.lay .swatch { margin: 0 4px 0 3px; }
.swatch { flex: none; width: 14px; height: 14px; background: #f00; border: 1px solid #400; }
.line { flex: none; width: 64px; height: 1px; background: #000; }
.line.short { width: 59px; margin-left: 5px; }

.props {
  display: grid;
  grid-template-columns: 18px 1fr;
  grid-auto-rows: 22px;
  gap: 2px 1px;
  align-items: center;
  align-content: start;
}
.props .swatch { width: 16px; height: 16px; }
.props .swatch + select { margin-left: -2px; }

/* Drawing tabs */
.filetabs {
  flex: none;
  height: 33px;
  display: flex;
  align-items: flex-end;
  padding: 0 0 0 16px;
  background: linear-gradient(#a6a6a6, #8c8c8c);
  border-top: 1px solid #777;
  border-bottom: 4px solid #666;
}
.filetab {
  height: 24px;
  display: flex;
  align-items: center;
  gap: 6px;
  padding: 0 19px 2px 16px;
  background: linear-gradient(#e6e6e6, #c0c0c0);
  clip-path: polygon(0 100%, 4px 90%, 8px 10%, 12px 0, calc(100% - 12px) 0, calc(100% - 8px) 10%, calc(100% - 4px) 90%, 100% 100%);
  color: #222;
  white-space: nowrap;
}
.newtab { margin: 0 0 5px; }

/* Model space */
.canvas {
  position: relative;
  flex: 1;
  min-height: 0;
  overflow: hidden;
  background: #fff;
  border: 1px solid #888;
  border-width: 0 0 1px 1px;
}
.drawing { position: absolute; inset: 0 0 0 -1px; }
.marks { font: 18px "Liberation Sans", Arial, sans-serif; fill: #bc151b; }
.axis { font: 300 19px Roboto, sans-serif; fill: #000; }
.viewlabel { position: absolute; left: 4px; top: 7px; color: #222; }

.dyn {
  position: absolute;
  left: 457px;
  top: 124px;
  width: 53px;
  height: 20px;
  padding: 0 1px;
  border: 1px solid #000;
  background: linear-gradient(#3f94de, #3f94de) 1px 1px / 41px 16px no-repeat #fff;
  color: #e4f3ff;
  font-size: 11px;
}
.tip {
  position: absolute;
  padding: 1px 9px 1px 4px;
  font-size: 11px;
  line-height: 17px;
  border: 1px solid #000;
  background: #999;
  color: #111;
  white-space: nowrap;
}
.angle { left: 574px; top: 112px; }
.endpoint { left: 564px; top: 171px; }

.mdi { position: absolute; right: 11px; top: 9px; display: flex; gap: 6px; }

.cube {
  position: absolute;
  right: 13px;
  top: 35px;
  width: 92px;
  height: 92px;
  display: grid;
  grid-template: 28px 36px 28px / 28px 36px 28px;
  place-items: center;
  font: bold 14px/16px "Liberation Sans", Arial, sans-serif;
  color: #bdbdbd;
}
.cube::before {
  content: "";
  position: absolute;
  inset: 4px;
  border: 9px solid #f9f9f9;
  border-radius: 50%;
}
.cube > * { position: relative; }
.cube .n, .cube .s { grid-column: 2; }
.cube .n { align-self: start; }
.cube .s { align-self: end; }
.cube .w { grid-area: 2 / 1; }
.cube button { grid-area: 2 / 2; }
.cube .e { grid-area: 2 / 3; justify-self: end; padding-right: 3px; }
.cube .w { justify-self: start; padding-left: 1px; }
.cube button {
  width: 36px;
  height: 36px;
  border: 1px solid #8c8c8c;
  border-radius: 2px;
  background: linear-gradient(#e2e4ea, #e2e4ea) center / 22px 22px no-repeat #ececec;
  font: bold 9px/12px "Liberation Sans", Arial, sans-serif;
  color: #878787;
}
.wcs {
  position: absolute;
  right: 35px;
  top: 142px;
  height: 14px;
  padding: 0 4px;
  gap: 4px;
  border-radius: 3px;
  background: #ecebf3;
  color: #8a8a8a;
  font: 11px/14px "Liberation Sans", Arial, sans-serif;
}
.navbar {
  position: absolute;
  right: 4px;
  top: 182px;
  border: 2px solid #c4c4c4;
  border-radius: 5px;
  background: #f5f5f5;
}

/* Command line */
.command {
  position: absolute;
  left: 253px;
  right: 256px;
  bottom: 0;
  display: flex;
  flex-direction: column;
  align-items: flex-start;
  gap: 5px;
  font: 12px/15px "DejaVu Sans Mono", monospace;
}
.command output {
  margin-left: 60px;
  padding: 0 1px;
  border-radius: 2px;
  color: #fff;
  white-space: nowrap;
}
.command .h1 { background: #969696; color: #f0f0f0; }
.command .h2 { background: #7a7a7a; }
.command .h3 { background: #686868; }

.cmdline {
  align-self: stretch;
  height: 27px;
  margin-top: -3px;
  display: flex;
  border: 1px solid #666;
  border-radius: 3px;
  overflow: hidden;
  background: #fff;
  color: #000;
}
.handle {
  flex: none;
  width: 53px;
  display: flex;
  align-items: center;
  gap: 8px;
  padding-left: 4px;
  background: linear-gradient(#565656, #868686);
}
.prompt { flex: 1; min-width: 0; display: flex; align-items: center; gap: 3px; padding: 0 3px 0 5px; white-space: pre; }
.prompt b { margin-left: 2px; }
.prompt button { height: 17px; padding: 0 1px; border-radius: 2px; background: #d2d2d2; }
.prompt span + button { margin-left: -3px; }
.prompt button + span { margin-left: -3px; }
.prompt em { font-style: normal; color: #2a1cc0; }
.prompt .caret-up { margin-left: auto; }

/* Layout tabs */
.layouts {
  flex: none;
  height: 17px;
  display: flex;
  align-items: stretch;
  background: #ececec;
  color: #111;
  font: 11px/16px Roboto, sans-serif;
}
.step { display: flex; padding-left: 1px; }
.step button { width: 15px; border-right: 1px solid #999; }
.layouts > button { padding: 0 5px; }
.layouts > .cur { padding: 0 7px; }

/* Status bar */
.status {
  position: relative;
  flex: none;
  height: 22px;
  display: flex;
  background: linear-gradient(#747474, #969696);
  border-top: 1px solid #1c1c1c;
  color: #111;
  font: 12px/16px Roboto, sans-serif;
}
.coords { width: 172px; display: flex; align-items: center; gap: 10px; padding-left: 12px; white-space: nowrap; font-size: 11px; }
.coords span:last-child { margin-left: 6px; }
.modes { display: flex; border-left: 1px solid #444; }
.modes button, .tools button {
  height: 21px;
  border-right: 1px solid #444;
  background: linear-gradient(#a0a0a0, #c2c2c2);
}
.modes button { padding: 0 2px; }
.modes .on { background: linear-gradient(#dff0f6, #8cc4da); }
.tools { margin-left: auto; display: flex; border-left: 1px solid #444; }
.tools button { width: 22px; }
.tools button:first-child { width: 43px; }
.tools .scale { width: 52px; gap: 3px; }
.tools .tight { width: 11px; }
.dim svg { opacity: .5; }
.gap { width: 11px; border-right: 1px solid #444; }
.gap.small { width: 6px; }
.tray { display: flex; align-items: center; justify-content: space-evenly; width: 76px; margin: 2px 1px; border: 1px solid #555; background: #8c8c8c; }
.grip { align-self: center; }
.watermark {
  position: absolute;
  right: -5px;
  top: 2px;
  font: bold 24px/24px "Liberation Sans", Arial, sans-serif;
  color: rgba(70, 70, 70, .6);
  pointer-events: none;
}
```
